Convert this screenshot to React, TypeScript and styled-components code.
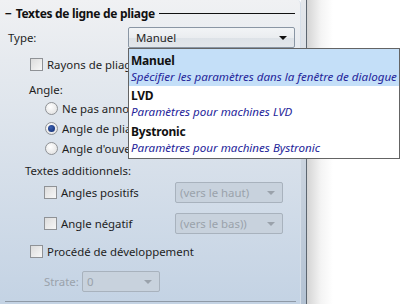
import React from 'react';
import styled, { createGlobalStyle } from 'styled-components';

const GlobalStyle = createGlobalStyle`
  html, body {
    margin: 0;
    padding: 0;
    width: 400px;
    height: 304px;
    overflow: hidden;
  }
  body {
    font-family: 'Noto Sans', 'Open Sans', sans-serif;
    font-size: 11.4px;
    color: #1e1e1e;
  }
`;

const Screen = styled.div`
  display: flex;
  width: 400px;
  height: 304px;
`;

const Panel = styled.div`
  position: relative;
  width: 301px;
  height: 304px;
  box-sizing: border-box;
  background: linear-gradient(to bottom, #f0f1f3 0px, #e6eaef 60px, #c4d3e4 300px);
  border-right: 1px solid #d6dfe9;
  border-top-right-radius: 4px;
  padding-left: 5px;
  display: flex;
  flex-direction: column;
  z-index: 2;
`;

const ScrollStrip = styled.div`
  width: 5px;
  height: 304px;
  background: linear-gradient(to bottom, #e4e7eb, #b3c2d3);
  border-right: 1px solid #5c6670;
`;

const Outside = styled.div`
  flex: 1;
  background: linear-gradient(to right, #d4d4d4 0px, #f4f4f4 14px, #ffffff 26px);
`;

const Header = styled.div`
  height: 26px;
  display: flex;
  align-items: center;
  gap: 4px;
  font-weight: bold;
  font-size: 12px;
  letter-spacing: -0.3px;
  color: #111;
  padding-right: 5px;
`;

const HeaderRule = styled.div`
  flex: 1;
  height: 1px;
  background: #111;
  margin-top: 1px;
`;

const Row = styled.div<{ $h: number; $top?: number; $indent: number }>`
  display: flex;
  align-items: center;
  height: ${(p) => p.$h}px;
  margin-top: ${(p) => p.$top || 0}px;
  padding-left: ${(p) => p.$indent}px;
`;

const Label = styled.span<{ $w?: number; $disabled?: boolean }>`
  white-space: nowrap;
  width: ${(p) => (p.$w ? p.$w + 'px' : 'auto')};
  flex-shrink: 0;
  color: ${(p) => (p.$disabled ? '#9aa2ab' : '#1e1e1e')};
`;

const Box = styled.span`
  width: 11px;
  height: 11px;
  border: 1px solid #8f9296;
  background: linear-gradient(135deg, #dcdcdc, #f7f7f7);
  margin-right: 4px;
  flex-shrink: 0;
`;

const Radio = styled.span<{ $on?: boolean }>`
  position: relative;
  width: 11px;
  height: 11px;
  border-radius: 50%;
  border: 1px solid #8f9296;
  background: radial-gradient(circle at 40% 35%, #ffffff, #dcdcdc);
  margin-right: 4px;
  flex-shrink: 0;
  &::after {
    content: '';
    display: ${(p) => (p.$on ? 'block' : 'none')};
    position: absolute;
    left: 2px;
    top: 2px;
    width: 7px;
    height: 7px;
    border-radius: 50%;
    background: radial-gradient(circle at 40% 35%, #3a5fb0, #0f2a6e);
  }
`;

const Combo = styled.div<{ $w: number; $disabled?: boolean }>`
  position: relative;
  box-sizing: border-box;
  width: ${(p) => p.$w}px;
  height: 21px;
  border: 1px solid ${(p) => (p.$disabled ? '#a8b2bd' : '#8a96a4')};
  border-radius: 2px;
  background: ${(p) =>
    p.$disabled
      ? '#c8d2dd'
      : 'linear-gradient(to bottom, #f2f4f6 0%, #eaedf0 50%, #dde2e7 51%, #e3e7eb 100%)'};
  color: ${(p) => (p.$disabled ? '#9aa2ab' : '#1e1e1e')};
  display: flex;
  align-items: center;
  padding-left: ${(p) => (p.$disabled ? 4 : 7)}px;
  flex-shrink: 0;
`;

const Arrow = styled.span<{ $disabled?: boolean }>`
  position: absolute;
  right: 7px;
  top: 8px;
  width: 0;
  height: 0;
  border-left: 4px solid transparent;
  border-right: 4px solid transparent;
  border-top: 4px solid ${(p) => (p.$disabled ? '#9aa2ab' : '#111')};
`;

const Popup = styled.div`
  position: absolute;
  left: -1px;
  top: 20px;
  width: 272px;
  box-sizing: border-box;
  border: 1px solid #646464;
  background: #fff;
  z-index: 5;
  color: #111;
  font-size: 12px;
`;

const Option = styled.div<{ $active?: boolean; $first?: boolean }>`
  box-sizing: border-box;
  background: ${(p) => (p.$active ? '#c4dff8' : '#fff')};
  padding: ${(p) => (p.$first ? 3 : 1)}px 2px 0 2px;
  height: ${(p) => (p.$first ? 37 : 36)}px;
`;

const OptTitle = styled.div`
  font-weight: bold;
  line-height: 17px;
  letter-spacing: -0.2px;
`;

const OptDesc = styled.div`
  font-style: italic;
  font-size: 11.6px;
  color: #25259a;
  line-height: 16px;
  white-space: nowrap;
`;

const BottomRule = styled.div`
  margin-top: 9px;
  width: 291px;
  height: 1px;
  background: #8f9aa7;
`;

const options = [
  { title: 'Manuel', desc: 'Spécifier les paramètres dans la fenêtre de dialogue', active: true },
  { title: 'LVD', desc: 'Paramètres pour machines LVD' },
  { title: 'Bystronic', desc: 'Paramètres pour machines Bystronic' },
];

export default function App() {
  return (
    <Screen>
      <GlobalStyle />
      <Panel>
        <Header>
          <span>−</span>
          <span>Textes de ligne de pliage</span>
          <HeaderRule />
        </Header>

        <Row $h={22} $indent={3}>
          <Label $w={120}>Type:</Label>
          <Combo $w={167}>
            Manuel
            <Arrow />
            <Popup>
              {options.map((o, i) => (
                <Option key={o.title} $active={o.active} $first={i === 0}>
                  <OptTitle>{o.title}</OptTitle>
                  <OptDesc>{o.desc}</OptDesc>
                </Option>
              ))}
            </Popup>
          </Combo>
        </Row>

        <Row $h={32} $indent={25}>
          <Box />
          <Label>Rayons de pliage</Label>
        </Row>

        <Row $h={18} $indent={24}>
          <Label>Angle:</Label>
        </Row>
        <Row $h={20} $indent={40}>
          <Radio />
          <Label>Ne pas annoter</Label>
        </Row>
        <Row $h={20} $indent={40}>
          <Radio $on />
          <Label>Angle de pliage</Label>
        </Row>
        <Row $h={20} $indent={40}>
          <Radio />
          <Label>Angle d'ouverture</Label>
        </Row>

        <Row $h={24} $indent={20}>
          <Label>Textes additionnels:</Label>
        </Row>

        <Row $h={21} $indent={39}>
          <Box />
          <Label $w={114}>Angles positifs</Label>
          <Combo $w={108} $disabled>
            (vers le haut)
            <Arrow $disabled />
          </Combo>
        </Row>
        <Row $h={21} $top={10} $indent={39}>
          <Box />
          <Label $w={114}>Angle négatif</Label>
          <Combo $w={108} $disabled>
            (vers le bas))
            <Arrow $disabled />
          </Combo>
        </Row>

        <Row $h={22} $top={6} $indent={25}>
          <Box />
          <Label>Procédé de développement</Label>
        </Row>

        <Row $h={21} $top={9} $indent={39}>
          <Label $w={38} $disabled>Strate:</Label>
          <Combo $w={78} $disabled>
            0
            <Arrow $disabled />
          </Combo>
        </Row>

        <BottomRule />
      </Panel>
      <ScrollStrip />
      <Outside />
    </Screen>
  );
}
